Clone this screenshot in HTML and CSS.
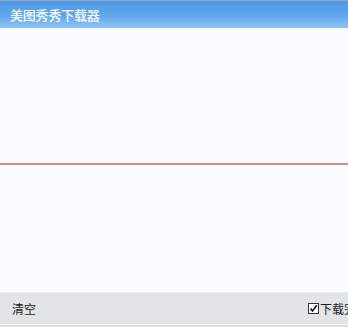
FILE: index.html
```html
<!DOCTYPE html>
<html>
  <head>
    <meta charset="utf-8">
    <title>美图秀秀下载器</title>
    <link rel="stylesheet" href="styles.css">
  </head>
  <body>
    <div class="window">
      <div class="titlebar">美图秀秀下载器</div>
      <div class="content">
        <div class="pane pane-top"></div>
        <div class="divider"></div>
        <div class="pane"></div>
      </div>
      <div class="footer">
        <span class="clear">清空</span>
        <label class="option">
          <span class="check">
            <svg width="9" height="9" viewBox="0 0 9 9"><path d="M1.5 4.5 L3.5 7 L7.8 1.2" fill="none" stroke="#111" stroke-width="1.6"/></svg>
          </span>
          <span class="option-text">下载完成后关闭</span>
        </label>
      </div>
      <div class="bottom-edge"></div>
    </div>
  </body>
</html>
```

FILE: styles.css
```css
body {
  margin: 0;
  width: 348px;
  height: 327px;
  overflow: hidden;
  font-family: "Noto Sans CJK SC", sans-serif;
}

.window {
  display: flex;
  flex-direction: column;
  height: 327px;
  background: #fafcff;
}

.titlebar {
  height: 28px;
  box-sizing: border-box;
  border-top: 1px solid #9aa7b4;
  background: linear-gradient(#4b97e6, #62a8ee 55%, #8ec3f6);
  color: #fff;
  font-size: 13px;
  font-weight: 500;
  line-height: 27px;
  padding-left: 10px;
  letter-spacing: -0.2px;
}

.content {
  flex: 1;
  display: flex;
  flex-direction: column;
  border-top: 1px solid #f4f8fd;
}

.pane {
  flex: 1;
}

.pane-top {
  flex: none;
  height: 134px;
}

.divider {
  height: 2px;
  background: #de8a94;
}

.footer {
  height: 32px;
  box-sizing: border-box;
  background: #e2e5e8;
  border-top: 1px solid #ebedf0;
  display: flex;
  align-items: center;
  justify-content: space-between;
  padding-left: 12px;
  font-size: 12px;
  color: #222;
  white-space: nowrap;
  overflow: hidden;
}

.option {
  display: flex;
  align-items: center;
  margin-right: -56px;
}

.check {
  width: 9px;
  height: 9px;
  border: 1px solid #333;
  background: #fff;
  display: flex;
  margin-right: 1px;
}

.bottom-edge {
  height: 3px;
  box-sizing: border-box;
  border-top: 1px solid #f5f6f7;
  background: #dde0e3;
}
```
